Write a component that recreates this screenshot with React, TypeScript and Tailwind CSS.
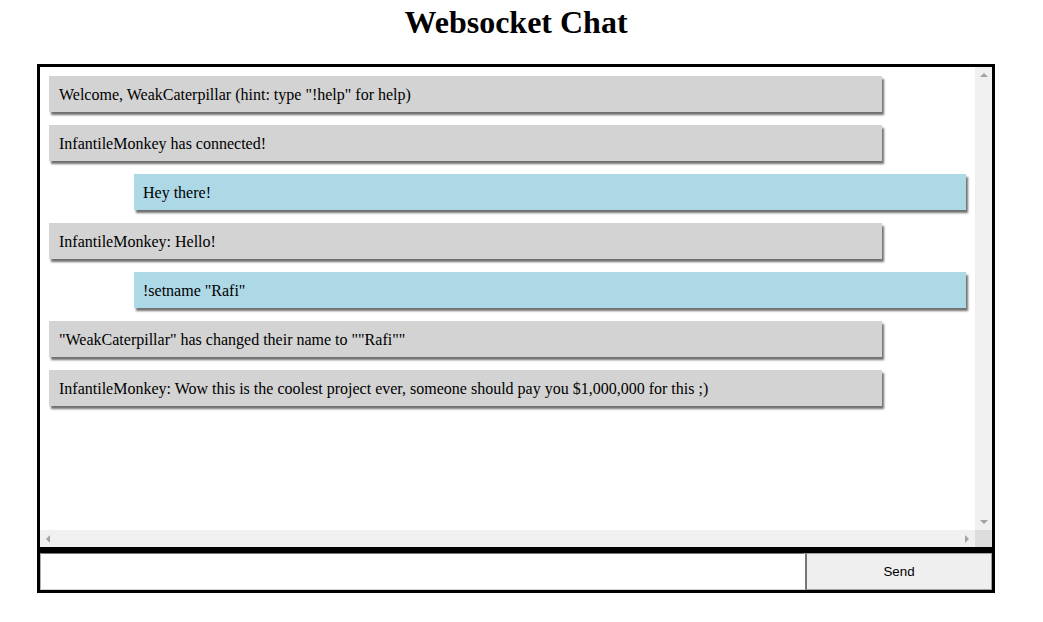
import React from "react";

type Msg = { text: string; mine?: boolean };

const messages: Msg[] = [
  { text: 'Welcome, WeakCaterpillar (hint: type "!help" for help)' },
  { text: "InfantileMonkey has connected!" },
  { text: "Hey there!", mine: true },
  { text: "InfantileMonkey: Hello!" },
  { text: '!setname "Rafi"', mine: true },
  { text: '"WeakCaterpillar" has changed their name to ""Rafi""' },
  { text: "InfantileMonkey: Wow this is the coolest project ever, someone should pay you $1,000,000 for this ;)" },
];

const Arrow = ({ dir }: { dir: "up" | "down" | "left" | "right" }) => {
  const pts = {
    up: "0,5 4,1 8,5",
    down: "0,1 4,5 8,1",
    left: "5,0 1,4 5,8",
    right: "1,0 5,4 1,8",
  }[dir];
  const size = dir === "up" || dir === "down" ? "w-[8px] h-[6px]" : "w-[6px] h-[8px]";
  const box = dir === "up" || dir === "down" ? "0 0 8 6" : "0 0 6 8";
  return (
    <svg viewBox={box} className={size}>
      <polygon points={pts} fill="#a3a3a3" />
    </svg>
  );
};

export default function App() {
  return (
    <div className="min-h-screen bg-white font-['Liberation_Serif',serif] text-black">
      <div className="ml-[37px] w-[958px]">
        <h1 className="pt-[4px] text-center text-[32px] font-bold leading-[37px]">Websocket Chat</h1>

        <div className="mt-[23px] flex h-[486px] flex-col border-[3px] border-black">
          <div className="flex h-[463px]">
            <div className="flex flex-1 flex-col gap-[13px] overflow-hidden px-[9px] pt-[9px]">
              {messages.map((m, i) => (
                <div
                  key={i}
                  className={
                    m.mine
                      ? "ml-auto w-[832px] bg-[#add8e6] px-[9px] pt-[10px] pb-[8px] text-[16px] leading-[18px] whitespace-nowrap shadow-[2px_3px_2px_#707070]"
                      : "w-[833px] bg-[#d3d3d3] px-[10px] pt-[10px] pb-[8px] text-[16px] leading-[18px] whitespace-nowrap shadow-[2px_3px_2px_#707070]"
                  }
                >
                  {m.text}
                </div>
              ))}
            </div>
            <div className="flex w-[17px] flex-col items-center justify-between bg-[#f0f0f0] py-[5px]">
              <Arrow dir="up" />
              <Arrow dir="down" />
            </div>
          </div>
          <div className="flex h-[17px]">
            <div className="flex flex-1 items-center justify-between bg-[#f0f0f0] px-[5px]">
              <Arrow dir="left" />
              <Arrow dir="right" />
            </div>
            <div className="w-[17px] bg-[#dcdcdc]" />
          </div>
        </div>

        <form className="flex h-[43px] border-[3px] border-black" onSubmit={(e) => e.preventDefault()}>
          <input
            type="text"
            className="h-full flex-1 border border-t-[#767676] border-l-[#b0b0b0] border-r-white border-b-[#d0d0d0] bg-white px-1 outline-none"
          />
          <button
            type="submit"
            className="h-full w-[187px] border border-l-2 border-[#a0a0a0] border-l-[#767676] bg-[#efefef] font-['Liberation_Sans',Arial,sans-serif] text-[13.33px] text-black"
          >
            Send
          </button>
        </form>
      </div>
    </div>
  );
}
